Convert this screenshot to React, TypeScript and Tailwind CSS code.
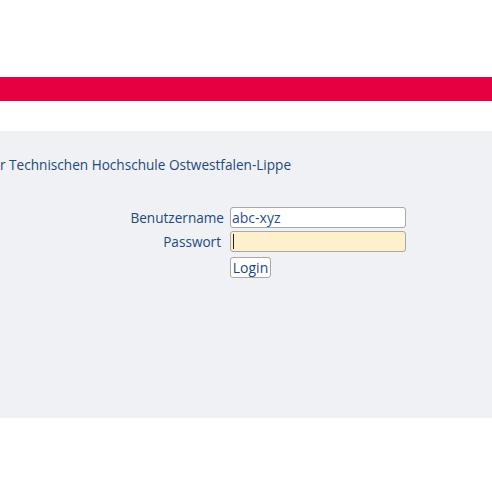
import React from 'react';

const font = { fontFamily: '"Open Sans", "Noto Sans", sans-serif' };

export default function App() {
  return (
    <div className="w-[492px] h-[492px] bg-white overflow-hidden" style={font}>
      <div className="h-[77px]" />
      <div className="h-[24px] bg-[#e60042]" />
      <div className="h-[30px]" />
      <div className="h-[287px] bg-[#f0f1f5]">
        <p className="pt-[24px] h-[76px] text-[13.6px] leading-[19px] text-[#1d4a7a] whitespace-nowrap">
          r Technischen Hochschule Ostwestfalen-Lippe
        </p>
        <div className="grid grid-cols-[230px_176px] gap-y-[3px] text-[13.6px] text-[#1d4a7a]">
          <label className="h-[21px] pr-[6px] text-right leading-[21px]">Benutzername</label>
          <input
            readOnly
            value="abc-xyz"
            className="h-[21px] w-[176px] bg-white border border-[#a8a8a8] rounded-[3px] px-[1px] text-[14px] leading-[19px] text-[#2a4f8c] outline-none"
          />
          <label className="h-[21px] pr-[9px] text-right leading-[21px]">Passwort</label>
          <div className="relative h-[21px] w-[176px]">
            <input
              readOnly
              type="password"
              className="h-[21px] w-[176px] bg-[#fff0cc] border border-[#a8a8a8] rounded-[3px] outline-none"
            />
            <span className="absolute left-[3px] top-[3px] h-[15px] w-px bg-[#222]" />
          </div>
          <div className="mt-[2px]" />
          <button className="mt-[2px] h-[21px] w-[41px] bg-white border border-[#a8a8a8] rounded-[3px] text-[14px] leading-[19px] text-[#1d4a7a]">
            Login
          </button>
        </div>
      </div>
    </div>
  );
}
